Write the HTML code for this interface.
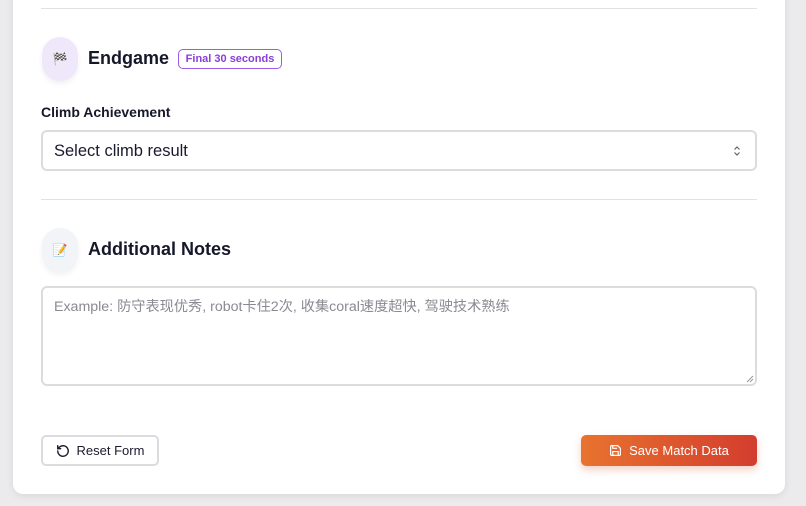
<!DOCTYPE html>
<html><head><meta charset="utf-8"><style>
*{box-sizing:border-box;margin:0;padding:0}
body{width:806px;height:506px;background:#ebebed;font-family:"Liberation Sans","Noto Sans CJK SC",sans-serif;position:relative;overflow:hidden;color:#1a1a2e}
.card{position:absolute;left:13px;top:-20px;width:772px;height:514px;background:#fff;border-radius:10px;box-shadow:0 2px 8px rgba(0,0,0,.08)}
.hr{position:absolute;left:41px;width:716px;height:1px;background:#e2e2e6}
.ic{position:absolute;width:36px;height:44px;border-radius:18px;display:flex;align-items:center;justify-content:center;font-size:12px;box-shadow:0 3px 6px rgba(0,0,0,.06)}
.h{position:absolute;font-size:18px;font-weight:bold;color:#16182a;white-space:nowrap}
.badge{position:absolute;left:178px;top:49px;width:104px;height:20px;border:1.5px solid #9b5de5;border-radius:5px;color:#8a3fd6;font-size:11px;font-weight:bold;text-align:center;line-height:18px;white-space:nowrap}
.lbl{position:absolute;left:41px;top:104px;font-size:14px;font-weight:bold;color:#16182a}
.sel{position:absolute;left:41px;top:130px;width:716px;height:41px;border:2px solid #dcdce0;border-radius:6px;font-size:16.5px;padding:10px 11px;color:#1a1a2e}
.ta{position:absolute;left:41px;top:286px;width:716px;height:100px;border:2px solid #dcdce0;border-radius:6px;font-size:14.2px;padding:8px 11px;color:#8a8a92}
.reset{position:absolute;left:41px;top:435px;width:118px;height:31px;border:2px solid #dcdce0;border-radius:5px;font-size:13px;color:#1a1a2e;display:flex;align-items:center;justify-content:center;gap:7px}
.save{position:absolute;left:581px;top:435px;width:176px;height:31px;border-radius:5px;background:linear-gradient(90deg,#e8732f,#d33d2e);color:#fff;font-size:13px;display:flex;align-items:center;justify-content:center;gap:7px;box-shadow:0 4px 8px rgba(210,80,40,.25)}
</style></head><body>
<div class="card"></div>
<div class="hr" style="top:8px"></div>
<div class="ic" style="left:42px;top:37px;background:#efe8fb">🏁</div>
<div class="h" style="left:88px;top:48px">Endgame</div>
<div class="badge">Final 30 seconds</div>
<div class="lbl">Climb Achievement</div>
<div class="sel">Select climb result<svg style="position:absolute;right:14px;top:14px" width="8" height="10" viewBox="0 0 8 10"><path d="M1.5 3.5L4 1l2.5 2.5M1.5 6.5L4 9l2.5-2.5" fill="none" stroke="#666" stroke-width="1.2"/></svg></div>
<div class="hr" style="top:199px"></div>
<div class="ic" style="left:42px;top:228px;background:#f2f4f8">📝</div>
<div class="h" style="left:88px;top:239px">Additional Notes</div>
<div class="ta">Example: 防守表现优秀, robot卡住2次, 收集coral速度超快, 驾驶技术熟练
<svg style="position:absolute;right:1px;bottom:1px" width="8" height="8"><path d="M7 1L1 7M7 4L4 7" stroke="#999" stroke-width="1"/></svg></div>
<div class="reset"><svg width="14" height="14" viewBox="0 0 24 24" fill="none" stroke="#1a1a2e" stroke-width="2.4" stroke-linecap="round"><path d="M3 12a9 9 0 1 0 3-6.7L3 8"/><path d="M3 3v5h5"/></svg>Reset Form</div>
<div class="save"><svg width="13" height="13" viewBox="0 0 24 24" fill="none" stroke="#fff" stroke-width="2.2"><path d="M5 3h11l5 5v11a2 2 0 0 1-2 2H5a2 2 0 0 1-2-2V5a2 2 0 0 1 2-2z"/><path d="M7 21v-7h10v7M7 3v5h8"/></svg>Save Match Data</div>
</body></html>
